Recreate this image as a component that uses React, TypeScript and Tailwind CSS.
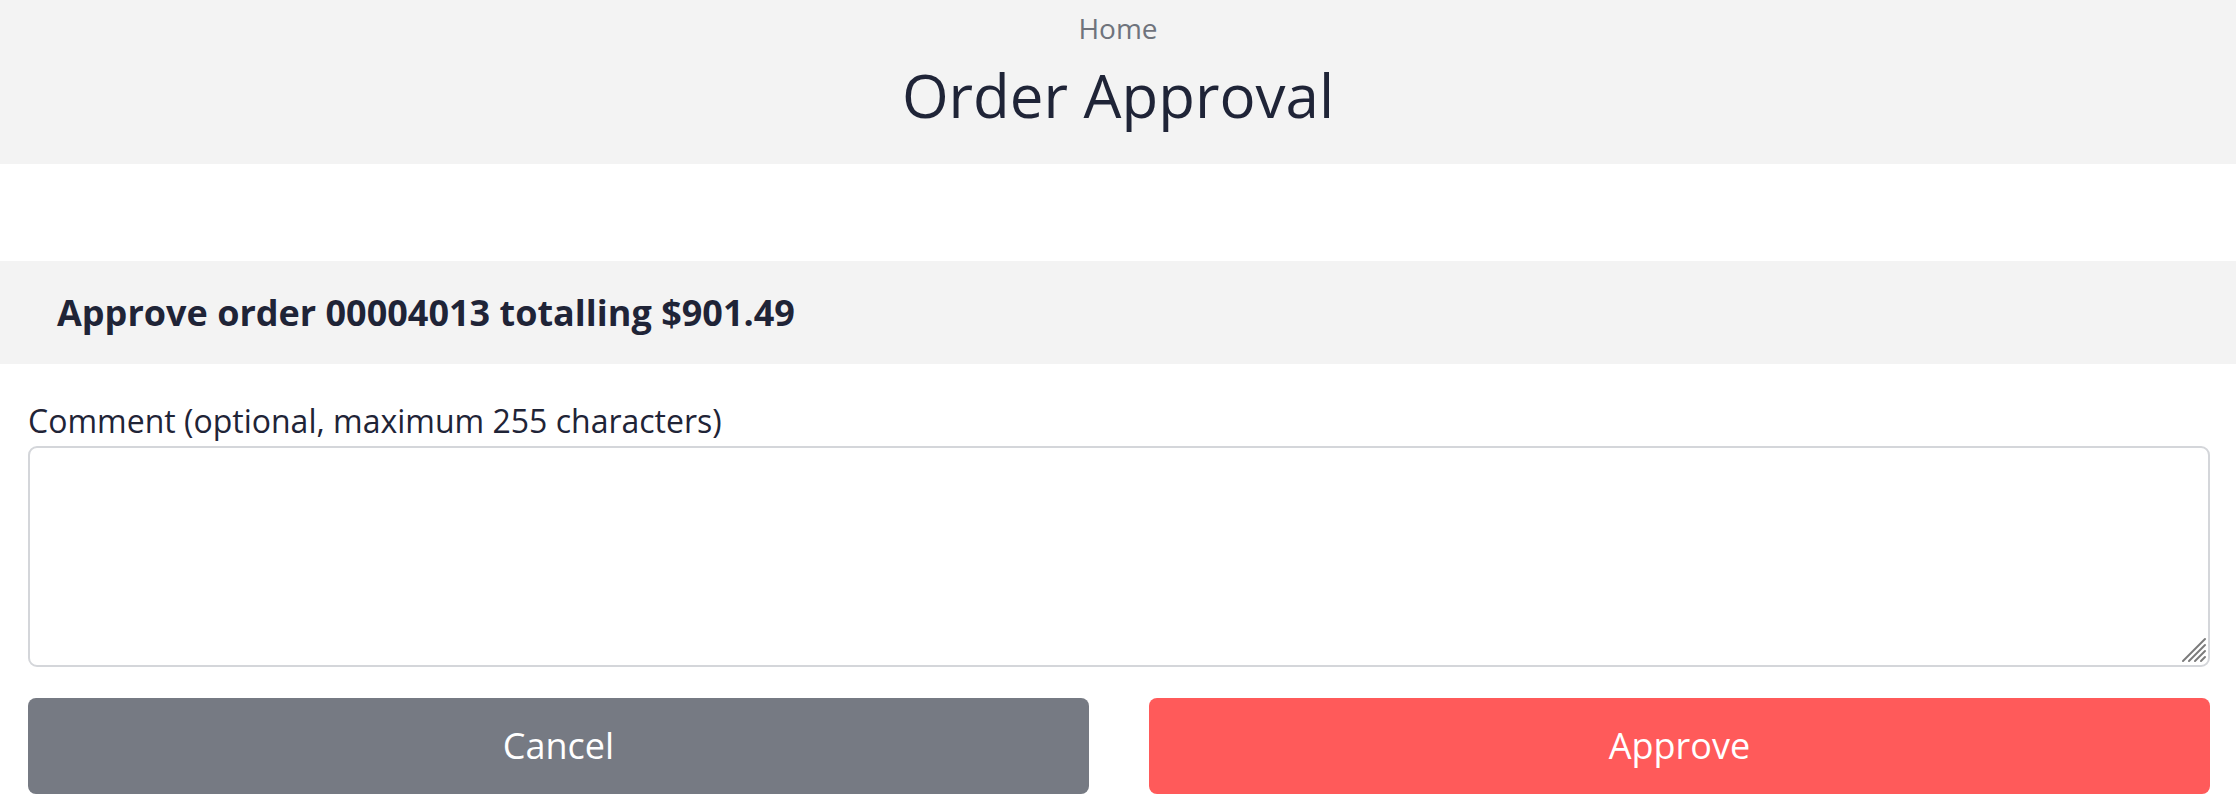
import React from "react";

export default function App() {
  return (
    <div
      className="w-[2236px] h-[808px] bg-white overflow-hidden"
      style={{ fontFamily: '"Open Sans", "Noto Sans", sans-serif' }}
    >
      <header className="h-[164px] bg-[#f3f3f3] flex flex-col items-center pt-[8px]">
        <div className="text-[28px] leading-[40px] text-[#6f737c]">Home</div>
        <h1 className="mt-[17px] text-[60px] leading-[60px] text-[#1f2437] font-normal">
          Order Approval
        </h1>
      </header>

      <div className="h-[97px]" />

      <section className="h-[103px] bg-[#f3f3f3] flex items-center pl-[57px]">
        <h2 className="text-[36px] leading-[36px] font-bold text-[#1f2437]">
          Approve order 00004013 totalling $901.49
        </h2>
      </section>

      <div className="pl-[28px] pr-[26px]">
        <label
          htmlFor="comment"
          className="block mt-[37px] text-[32px] leading-[40px] text-[#1f2437]"
        >
          Comment (optional, maximum 255 characters)
        </label>
        <div className="relative mt-[5px]">
          <textarea
            id="comment"
            className="block w-full h-[221px] border-2 border-[#d4d6da] rounded-[9px] bg-white outline-none resize-none"
          />
          <svg
            className="absolute right-[3px] bottom-[4px] pointer-events-none"
            width="26"
            height="26"
            viewBox="0 0 26 26"
          >
            <g stroke="#7b7b7b" strokeWidth="2" strokeLinecap="round">
              <line x1="2" y1="24" x2="24" y2="2" />
              <line x1="8" y1="24" x2="24" y2="8" />
              <line x1="14" y1="24" x2="24" y2="14" />
              <line x1="20" y1="24" x2="24" y2="20" />
            </g>
          </svg>
        </div>
        <div className="mt-[31px] grid grid-cols-2 gap-[60px]">
          <button className="h-[96px] rounded-[8px] bg-[#767a83] text-white text-[36px] leading-[36px] flex items-center justify-center">
            Cancel
          </button>
          <button className="h-[96px] rounded-[8px] bg-[#ff5a5a] text-white text-[36px] leading-[36px] flex items-center justify-center">
            Approve
          </button>
        </div>
      </div>
    </div>
  );
}
